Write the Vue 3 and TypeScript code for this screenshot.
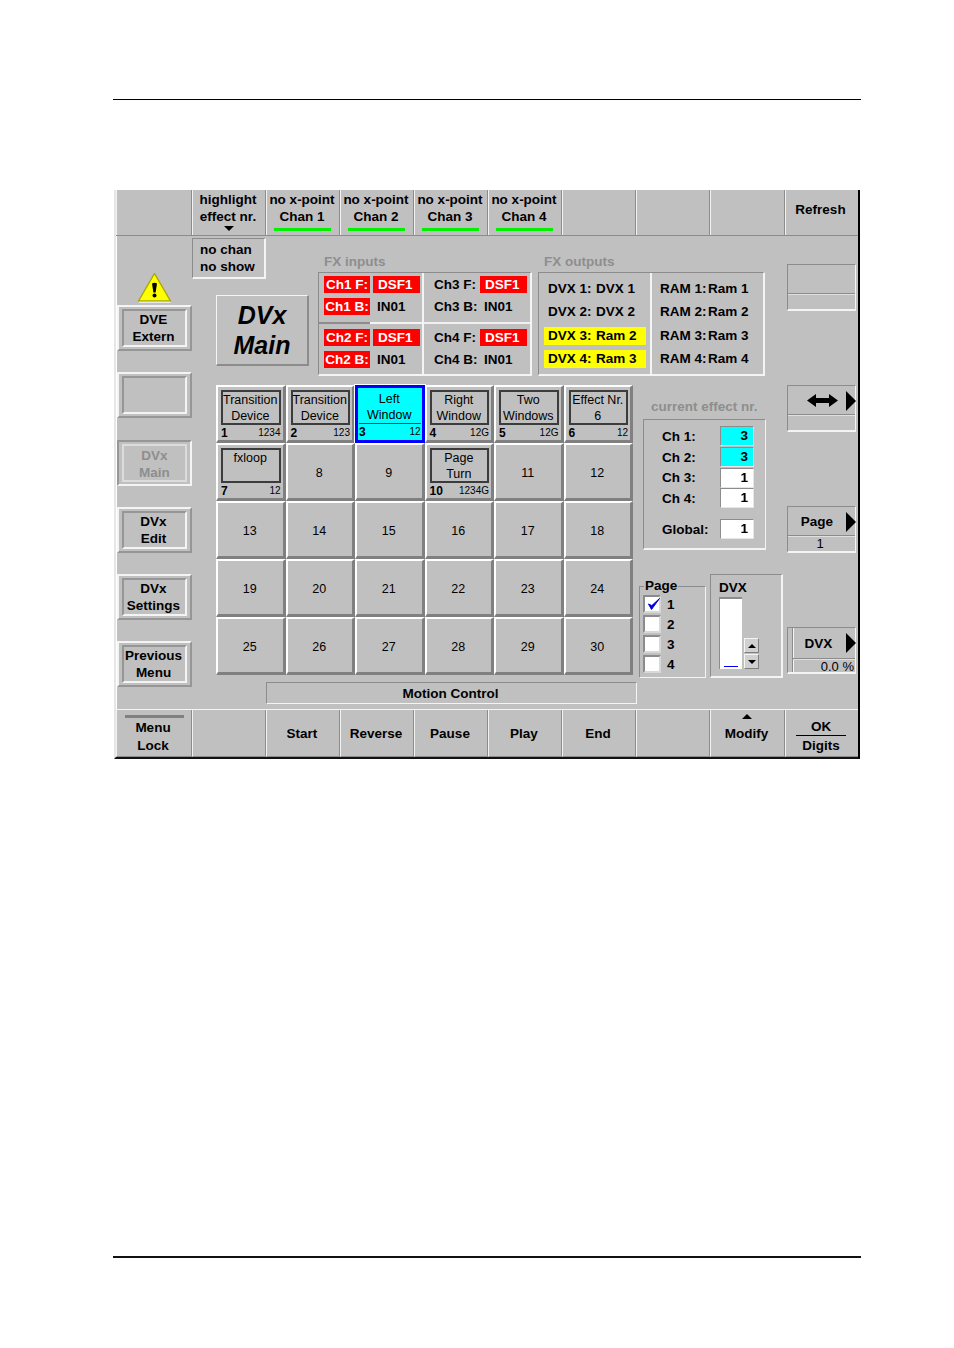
<script setup lang="ts">
const topCells = [
  { a: '', b: '' },
  { a: 'highlight', b: 'effect nr.', arrow: true },
  { a: 'no x-point', b: 'Chan 1', bar: true },
  { a: 'no x-point', b: 'Chan 2', bar: true },
  { a: 'no x-point', b: 'Chan 3', bar: true },
  { a: 'no x-point', b: 'Chan 4', bar: true },
  { a: '', b: '' },
  { a: '', b: '' },
  { a: '', b: '' },
  { a: 'Refresh', b: '' },
]
const sideButtons = [
  { a: 'DVE', b: 'Extern' },
  { a: '', b: '' },
  { a: 'DVx', b: 'Main', off: true },
  { a: 'DVx', b: 'Edit' },
  { a: 'DVx', b: 'Settings' },
  { a: 'Previous', b: 'Menu' },
]
const fxInputs = [
  [
    { l: 'Ch1 F:', v: 'DSF1', lr: true, vr: true },
    { l: 'Ch1 B:', v: 'IN01', lr: true, vr: false },
  ],
  [
    { l: 'Ch3 F:', v: 'DSF1', lr: false, vr: true },
    { l: 'Ch3 B:', v: 'IN01', lr: false, vr: false },
  ],
  [
    { l: 'Ch2 F:', v: 'DSF1', lr: true, vr: true },
    { l: 'Ch2 B:', v: 'IN01', lr: true, vr: false },
  ],
  [
    { l: 'Ch4 F:', v: 'DSF1', lr: false, vr: true },
    { l: 'Ch4 B:', v: 'IN01', lr: false, vr: false },
  ],
]
const dvxOut = [
  { l: 'DVX 1:', v: 'DVX 1' },
  { l: 'DVX 2:', v: 'DVX 2' },
  { l: 'DVX 3:', v: 'Ram 2', hi: true },
  { l: 'DVX 4:', v: 'Ram 3', hi: true },
]
const ramOut = [
  { l: 'RAM 1:', v: 'Ram 1' },
  { l: 'RAM 2:', v: 'Ram 2' },
  { l: 'RAM 3:', v: 'Ram 3' },
  { l: 'RAM 4:', v: 'Ram 4' },
]
interface Tile { n: number; a?: string; b?: string; ch?: string; sel?: boolean }
const named: Record<number, Tile> = {
  1: { n: 1, a: 'Transition', b: 'Device', ch: '1234' },
  2: { n: 2, a: 'Transition', b: 'Device', ch: '123' },
  3: { n: 3, a: 'Left', b: 'Window', ch: '12', sel: true },
  4: { n: 4, a: 'Right', b: 'Window', ch: '12G' },
  5: { n: 5, a: 'Two', b: 'Windows', ch: '12G' },
  6: { n: 6, a: 'Effect Nr.', b: '6', ch: '12' },
  7: { n: 7, a: 'fxloop', b: '', ch: '12' },
  10: { n: 10, a: 'Page', b: 'Turn', ch: '1234G' },
}
const tiles: Tile[] = Array.from({ length: 30 }, (_, i) => named[i + 1] ?? { n: i + 1 })
const channels = [
  { l: 'Ch 1:', v: 3, hi: true },
  { l: 'Ch 2:', v: 3, hi: true },
  { l: 'Ch 3:', v: 1, hi: false },
  { l: 'Ch 4:', v: 1, hi: false },
]
const pages = [1, 2, 3, 4]
const bottomCells = ['', 'Start', 'Reverse', 'Pause', 'Play', 'End', '']
</script>

<template>
  <div class="page">
    <div class="rule"></div>
    <div class="panel">
      <div class="topbar">
        <div v-for="(c, i) in topCells" :key="i" class="barcell">
          <span>{{ c.a }}</span>
          <span v-if="c.b">{{ c.b }}</span>
          <i v-if="c.arrow" class="tri-down"></i>
          <i v-if="c.bar" class="greenbar"></i>
        </div>
      </div>

      <div class="body">
        <div class="leftcol">
          <svg class="warn" width="35" height="31" viewBox="0 0 35 31">
            <path d="M17.5 1.5 L33.5 29 L1.5 29 Z" fill="#ffff00" stroke="#a8a800" stroke-width="1.4" stroke-linejoin="round" />
            <path d="M2 30.2 L33.5 30.2" stroke="#f2f2f2" stroke-width="1.2" />
            <path d="M15 11.5 Q17.5 9.8 20 11.5 L18.6 20.5 h-2.2 z" fill="#000" />
            <circle cx="17.5" cy="23.6" r="2" fill="#000" />
          </svg>
          <div class="sidebtns">
            <div v-for="(b, i) in sideButtons" :key="i" class="sidebtn" :class="{ off: b.off }">
              <div class="sideinner">
                <span>{{ b.a }}</span>
                <span>{{ b.b }}</span>
              </div>
            </div>
          </div>
        </div>

        <div class="midcol">
          <div class="toprow">
            <div class="titlecol">
              <div class="nochan">
                <span>no chan</span>
                <span>no show</span>
              </div>
              <div class="title">
                <span>DVx</span>
                <span>Main</span>
              </div>
            </div>
            <div class="fxblock inputs">
              <div class="fxlabel">FX inputs</div>
              <div class="fxbox fxgrid">
                <div v-for="(cell, i) in fxInputs" :key="i" class="fxcell">
                  <div v-for="r in cell" :key="r.l" class="fxrow">
                    <span class="fxl" :class="{ red: r.lr }">{{ r.l }}</span>
                    <span class="fxv" :class="{ red: r.vr }">{{ r.v }}</span>
                  </div>
                </div>
              </div>
            </div>
            <div class="fxblock outputs">
              <div class="fxlabel">FX outputs</div>
              <div class="fxbox outgrid">
                <div class="outcol dvx">
                  <div v-for="r in dvxOut" :key="r.l" class="outrow" :class="{ yellow: r.hi }">
                    <span class="outl">{{ r.l }}</span>
                    <span>{{ r.v }}</span>
                  </div>
                </div>
                <div class="outcol ram">
                  <div v-for="r in ramOut" :key="r.l" class="outrow">
                    <span class="outl">{{ r.l }}</span>
                    <span>{{ r.v }}</span>
                  </div>
                </div>
              </div>
            </div>
          </div>

          <div class="gridrow">
            <div class="tiles">
              <div v-for="t in tiles" :key="t.n" class="tile" :class="{ sel: t.sel, plain: !t.a }">
                <template v-if="t.a">
                  <div class="tilelabel">
                    <span>{{ t.a }}</span>
                    <span>{{ t.b }}</span>
                  </div>
                  <div class="tilefoot">
                    <b>{{ t.n }}</b>
                    <span>{{ t.ch }}</span>
                  </div>
                </template>
                <template v-else>{{ t.n }}</template>
              </div>
            </div>

            <div class="sidepanel">
              <div class="efflabel">current effect nr.</div>
              <div class="effbox">
                <div v-for="c in channels" :key="c.l" class="effrow">
                  <span>{{ c.l }}</span>
                  <span class="field" :class="{ cyan: c.hi }">{{ c.v }}</span>
                </div>
                <div class="effrow global">
                  <span>Global:</span>
                  <span class="field">1</span>
                </div>
              </div>

              <div class="pickers">
                <div class="pagegroup">
                  <div class="legend">Page</div>
                  <div v-for="p in pages" :key="p" class="checkrow">
                    <span class="check">
                      <svg v-if="p === 1" width="15" height="15" viewBox="0 0 15 15">
                        <path d="M2.5 7 L5.5 12.5 L13.5 1.5 L5.8 8.6 Z" fill="#0000e0" stroke="#0000e0" stroke-width="1" />
                      </svg>
                    </span>
                    <span>{{ p }}</span>
                  </div>
                </div>
                <div class="dvxbox">
                  <div class="dvxtitle">DVX</div>
                  <div class="dvxlistrow">
                    <div class="dvxlist"><i></i></div>
                    <div class="spin">
                      <span class="spinbtn"><i class="tri-up-s"></i></span>
                      <span class="spinbtn"><i class="tri-down-s"></i></span>
                    </div>
                  </div>
                </div>
              </div>
            </div>
          </div>

          <div class="motion">Motion Control</div>
        </div>

        <div class="rightcol">
          <div class="rbox first">
            <div class="rmain"></div>
            <div class="rsub"></div>
          </div>
          <div class="rbox second">
            <div class="rmain">
              <svg class="dbl" width="31" height="15" viewBox="0 0 31 15">
                <path d="M0 7.5 L9 1 V5 H22 V1 L31 7.5 L22 14 V10 H9 V14 Z" fill="#000" />
              </svg>
              <i class="tri-right"></i>
            </div>
            <div class="rsub"></div>
          </div>
          <div class="rbox third">
            <div class="rmain">
              <span class="rtext">Page</span>
              <i class="tri-right"></i>
            </div>
            <div class="rsub">1</div>
          </div>
          <div class="rbox fourth">
            <div class="rmain">
              <span class="rtext">DVX</span>
              <i class="tri-right"></i>
            </div>
            <div class="rsub pct">0.0 %</div>
          </div>
        </div>
      </div>

      <div class="bottombar">
        <div class="barcell lock">
          <i class="lockbar"></i>
          <span>Menu</span>
          <span>Lock</span>
        </div>
        <div v-for="(c, i) in bottomCells" :key="i" class="barcell">{{ c }}</div>
        <div class="barcell modify">
          <i class="tri-up"></i>
          <span>Modify</span>
        </div>
        <div class="barcell okcell">
          <span class="ok">OK</span>
          <span>Digits</span>
        </div>
      </div>
    </div>
    <div class="rule bottom"></div>
  </div>
</template>

<style>
html, body { margin: 0; background: #fff; }
</style>

<style scoped>
.page {
  width: 954px;
  height: 1348px;
  overflow: hidden;
  background: #fff;
  font-family: "Liberation Sans", Arial, sans-serif;
  color: #000;
}
.rule { height: 1px; margin: 99px 93px 0 113px; background: #000; }
.rule.bottom { height: 2px; margin-top: 497px; background: #111; }

.panel {
  box-sizing: border-box;
  width: 746px;
  height: 569px;
  margin: 90px 0 0 114px;
  background: #c0c0c0;
  border-left: 2px solid #e6e6e6;
  border-right: 2px solid #000;
  border-bottom: 2px solid #111;
  box-shadow: inset 1px 0 0 #fff;
  font-size: 13.5px;
  font-weight: 700;
}
.panel span { white-space: nowrap; }

.topbar, .bottombar {
  display: grid;
  grid-template-columns: 76px repeat(7, 74px) 75px 1fr;
}
.topbar { height: 46px; border-bottom: 1px solid #8c8c8c; box-sizing: border-box; }
.bottombar { height: 48px; border-top: 1px solid #f4f4f4; box-sizing: border-box; }
.barcell {
  position: relative;
  box-sizing: border-box;
  display: flex;
  flex-direction: column;
  align-items: center;
  justify-content: center;
  border-left: 1px solid #f2f2f2;
  border-right: 1px solid #8c8c8c;
  padding-right: 2px;
  line-height: 17px;
}
.topbar .barcell { padding-bottom: 9px; }
.topbar .barcell:last-child { padding-bottom: 6px; padding-right: 3px; border-right: 0; }
.bottombar .barcell { border-bottom: 1px solid #8c8c8c; }
.bottombar .barcell:last-child { border-right: 0; }
.greenbar {
  position: absolute;
  left: 7px;
  right: 8px;
  bottom: 4px;
  height: 3px;
  background: #00f000;
}
.tri-down {
  position: absolute;
  left: 31px;
  bottom: 4px;
  border-left: 5px solid transparent;
  border-right: 5px solid transparent;
  border-top: 5px solid #000;
}
.tri-up {
  position: absolute;
  top: 4px;
  left: 31px;
  border-left: 5px solid transparent;
  border-right: 5px solid transparent;
  border-bottom: 5px solid #000;
}
.lockbar {
  position: absolute;
  top: 5px;
  left: 8px;
  right: 7px;
  height: 3px;
  background: #808080;
}
.bottombar .lock { padding-top: 7px; line-height: 18px; }
.okcell .ok {
  width: 50px;
  text-align: center;
  border-bottom: 1px solid #000;
  line-height: 17px;
  margin-bottom: 1px;
}
.bottombar .okcell { padding-top: 6px; line-height: 17px; }

.body { display: flex; height: 473px; }

.leftcol { width: 76px; padding: 36px 0 0 1px; box-sizing: border-box; }
.warn { display: block; margin: 0 0 2px 20px; }
.sidebtns { display: flex; flex-direction: column; gap: 21.3px; }
.sidebtn {
  box-sizing: border-box;
  width: 75px;
  height: 46px;
  padding: 2px 3px;
  background: #c0c0c0;
  border: 2px solid;
  border-color: #f4f4f4 #969696 #969696 #f4f4f4;
}
.sideinner {
  box-sizing: border-box;
  height: 100%;
  display: flex;
  flex-direction: column;
  align-items: center;
  justify-content: center;
  padding-right: 2px;
  border: 2px solid;
  border-color: #969696 #f4f4f4 #f4f4f4 #969696;
  line-height: 17px;
}
.sidebtn.off {
  border-color: #969696 #f4f4f4 #f4f4f4 #969696;
  color: #8e8e8e;
}
.sidebtn.off .sideinner { border-color: #dcdcdc; padding-top: 2px; padding-right: 0; }

.midcol { width: 593px; padding-top: 2px; box-sizing: border-box; }
.toprow { display: flex; height: 138px; }
.titlecol { width: 126px; }
.nochan {
  box-sizing: border-box;
  width: 74px;
  height: 41px;
  padding-left: 7px;
  display: flex;
  flex-direction: column;
  justify-content: center;
  border: 1px solid;
  border-width: 1px 2px 2px 1px;
  border-color: #8c8c8c #f4f4f4 #f4f4f4 #8c8c8c;
  line-height: 17px;
}
.title {
  box-sizing: border-box;
  width: 93px;
  height: 71px;
  margin: 16px 0 0 24px;
  display: flex;
  flex-direction: column;
  align-items: center;
  justify-content: center;
  border: 1px solid;
  border-width: 1px 2px 2px 1px;
  border-color: #f4f4f4 #8c8c8c #8c8c8c #f4f4f4;
  font-size: 25px;
  font-style: italic;
  line-height: 30px;
}

.fxblock { display: flex; flex-direction: column; justify-content: flex-end; }
.inputs { width: 214px; }
.outputs { width: 227px; margin-left: 6px; }
.fxlabel { color: #8e8e8e; line-height: 17px; margin: 0 0 2px 6px; }
.fxbox {
  box-sizing: border-box;
  height: 104px;
  border: 1px solid;
  border-width: 1px 2px 2px 1px;
  border-color: #8c8c8c #f4f4f4 #f4f4f4 #8c8c8c;
}
.fxgrid { display: grid; grid-template-columns: 105px 1fr; grid-template-rows: 51px 1fr; }
.fxcell {
  display: flex;
  flex-direction: column;
  gap: 5px;
  padding: 3px 0 0 5px;
  box-sizing: border-box;
}
.fxcell:nth-child(1), .fxcell:nth-child(3) { border-right: 2px solid; border-image: linear-gradient(90deg, #8c8c8c 50%, #f4f4f4 50%) 1; }
.fxcell:nth-child(1), .fxcell:nth-child(2) { border-bottom: 2px solid #f0f0f0; }
.fxcell:nth-child(3), .fxcell:nth-child(4) { padding-top: 5px; }
.fxcell:nth-child(2), .fxcell:nth-child(4) { padding-left: 10px; }
.fxrow { display: flex; height: 17px; line-height: 17px; }
.fxl { width: 46px; text-align: center; margin-right: 3px; }
.fxcell:nth-child(2) .fxl, .fxcell:nth-child(4) .fxl { text-align: left; margin-right: 0; }
.fxv { width: 47px; padding-left: 5px; box-sizing: border-box; }
.fxv:not(.red) { padding-left: 4px; }
.red { background: #ff0000; color: #fff; }

.outgrid { display: flex; }
.outcol { display: flex; flex-direction: column; gap: 5.3px; padding-top: 7px; box-sizing: border-box; }
.dvx { width: 113px; padding-left: 5px; padding-right: 5px; border-right: 2px solid; border-image: linear-gradient(90deg, #8c8c8c 50%, #f4f4f4 50%) 1; }
.ram { padding-left: 4px; }
.outrow { display: flex; height: 18px; line-height: 18px; padding-left: 4px; }
.dvx .outrow { width: 102px; box-sizing: border-box; }
.outl { width: 48px; }
.yellow { background: #ffff00; }

.gridrow { display: flex; height: 292px; margin: 9px 0 0 24px; }
.tiles {
  display: grid;
  grid-template-columns: repeat(6, 69.5px);
  grid-auto-rows: 58px;
  width: 417px;
}
.tile {
  box-sizing: border-box;
  border: 2px solid;
  border-width: 2px 3px 3px 2px;
  border-color: #fff #808080 #808080 #fff;
  font-size: 12.5px;
  font-weight: 400;
  display: flex;
  flex-direction: column;
  padding: 3px 2px 0 3px;
}
.tile.plain { align-items: center; justify-content: center; padding: 3px 1px 0 0; }
.tilelabel {
  box-sizing: border-box;
  height: 35px;
  padding-right: 1px;
  display: flex;
  flex-direction: column;
  align-items: center;
  border: 2px solid #3c3c3c;
  line-height: 16px;
  flex: none;
}
.tilefoot {
  display: flex;
  justify-content: space-between;
  align-items: flex-end;
  height: 15px;
  font-size: 10px;
  line-height: 14px;
}
.tilefoot b { font-size: 12px; }
.tile.sel {
  background: #00ffff;
  border: 3px solid #0000ff;
  box-shadow: 0 0 0 1px #fff;
  padding: 2px 1px 0 1px;
}
.tile.sel .tilelabel { border: 0; border-bottom: 1px solid #3c3c3c; height: 34px; padding-top: 1px; }

.sidepanel { margin-left: 6px; width: 146px; }
.efflabel { color: #8e8e8e; margin: 13px 0 4px 12px; line-height: 17px; white-space: nowrap; }
.effbox {
  box-sizing: border-box;
  width: 123px;
  height: 131px;
  margin-left: 4px;
  padding: 6px 0 0 18px;
  border: 1px solid;
  border-width: 1px 1px 2px 1px;
  border-color: #8c8c8c #f4f4f4 #f4f4f4 #8c8c8c;
}
.effrow { display: flex; align-items: center; justify-content: space-between; height: 20.7px; width: 92px; }
.global { margin-top: 10px; }
.field {
  box-sizing: border-box;
  width: 34px;
  height: 20px;
  padding-right: 5px;
  text-align: right;
  line-height: 18px;
  background: #fff;
  border: 1px solid;
  border-color: #8c8c8c #e6e6e6 #e6e6e6 #8c8c8c;
}
.field.cyan { background: #00ffff; }

.pickers { display: flex; margin-top: 24px; }
.pagegroup {
  position: relative;
  box-sizing: border-box;
  width: 67px;
  height: 92px;
  margin-top: 12px;
  padding: 7px 0 0 3px;
  border: 1px solid;
  border-color: #8c8c8c #f4f4f4 #f4f4f4 #8c8c8c;
}
.legend {
  position: absolute;
  top: -9px;
  left: 4px;
  padding: 0 1px;
  background: #c0c0c0;
  line-height: 16px;
}
.checkrow { display: flex; align-items: center; height: 20px; gap: 6px; }
.check {
  box-sizing: border-box;
  display: block;
  width: 18px;
  height: 18px;
  background: #fff;
  border: 2px solid;
  border-color: #8c8c8c #d8d8d8 #d8d8d8 #8c8c8c;
}
.check svg { display: block; margin: 0 0 0 1px; }
.dvxbox {
  box-sizing: border-box;
  width: 73px;
  height: 104px;
  margin-left: 4px;
  padding: 4px 0 0 8px;
  border: 1px solid;
  border-width: 1px 2px 2px 1px;
  border-color: #8c8c8c #f4f4f4 #f4f4f4 #8c8c8c;
}
.dvxtitle { line-height: 17px; }
.dvxlistrow { display: flex; align-items: flex-end; margin-top: 1px; gap: 2px; }
.dvxlist {
  box-sizing: border-box;
  position: relative;
  width: 23px;
  height: 72px;
  background: #fff;
  border-top: 2px solid #8c8c8c;
  border-left: 1px solid #8c8c8c;
}
.dvxlist i {
  position: absolute;
  left: 4px;
  right: 4px;
  bottom: 2px;
  height: 1px;
  background: #0000ff;
}
.spin { display: flex; flex-direction: column; gap: 1px; }
.spinbtn {
  box-sizing: border-box;
  display: flex;
  align-items: center;
  justify-content: center;
  width: 15px;
  height: 15px;
  background: #d0d0d0;
  border: 1px solid;
  border-color: #f4f4f4 #808080 #808080 #f4f4f4;
}
.tri-up-s { border-left: 4px solid transparent; border-right: 4px solid transparent; border-bottom: 4px solid #000; }
.tri-down-s { border-left: 4px solid transparent; border-right: 4px solid transparent; border-top: 4px solid #000; }

.motion {
  box-sizing: border-box;
  width: 371px;
  height: 22px;
  margin: 5px 0 0 74px;
  padding-right: 2px;
  text-align: center;
  line-height: 21px;
  border: 1px solid;
  border-color: #8c8c8c #f4f4f4 #f4f4f4 #8c8c8c;
}

.rightcol { flex: 1; padding: 28px 0 0 2px; box-sizing: border-box; }
.rbox {
  box-sizing: border-box;
  width: 69px;
  height: 47px;
  display: flex;
  flex-direction: column;
  border: 1px solid;
  border-width: 1px 1px 2px 1px;
  border-color: #8c8c8c #f4f4f4 #f4f4f4 #8c8c8c;
}
.second { margin-top: 74px; }
.third { margin-top: 74px; }
.fourth { margin-top: 74px; }
.rmain {
  position: relative;
  box-sizing: border-box;
  height: 29px;
  border-bottom: 1px solid #8c8c8c;
  display: flex;
  align-items: center;
  flex: none;
}
.second .rmain, .third .rmain { padding-top: 1px; }
.rsub {
  flex: 1;
  font-weight: 400;
  font-size: 13px;
  line-height: 13px;
  padding-right: 3px;
  text-align: center;
  border-top: 1px solid #e0e0e0;
}
.rsub.pct { text-align: right; padding-right: 1px; margin-left: 5px; }
.fourth .rmain { height: 31px; margin-left: 5px; }
.fourth { background: linear-gradient(90deg, transparent 4px, #8c8c8c 4px, #8c8c8c 5px, #f4f4f4 5px, #f4f4f4 6px, transparent 6px); }
.rtext { width: 58px; text-align: center; }
.fourth .rtext { width: 51px; }
.dbl { margin-left: 19px; }
.tri-right {
  position: absolute;
  right: -1px;
  top: 5px;
  border-top: 10px solid transparent;
  border-bottom: 10px solid transparent;
  border-left: 10px solid #000;
}
</style>
